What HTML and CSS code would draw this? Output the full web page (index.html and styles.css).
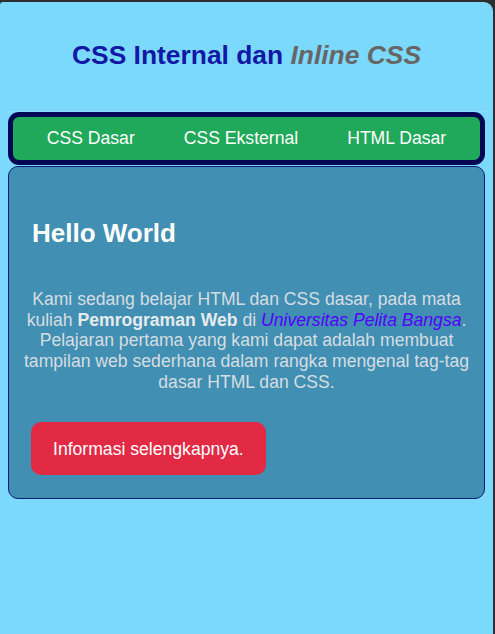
FILE: index.html
```html
<!DOCTYPE html>
<html lang="id">
<head>
<meta charset="utf-8">
<title>CSS Internal dan Inline CSS</title>
<link rel="stylesheet" href="styles.css">
</head>
<body>
<div class="window">
  <header class="header">
    <h1 class="title">CSS Internal dan <em class="title-em">Inline CSS</em></h1>
  </header>
  <nav class="nav">
    <a class="nav-link" href="#">CSS Dasar</a>
    <a class="nav-link" href="#">CSS Eksternal</a>
    <a class="nav-link" href="#">HTML Dasar</a>
  </nav>
  <section class="content">
    <h2 class="content-title">Hello World</h2>
    <p class="content-text">Kami sedang belajar HTML dan CSS dasar, pada mata kuliah <b class="strong">Pemrograman Web</b> di <i class="link-uni">Universitas Pelita Bangsa</i>. Pelajaran pertama yang kami dapat adalah membuat tampilan web sederhana dalam rangka mengenal tag-tag dasar HTML dan CSS.</p>
    <a class="btn" href="#">Informasi selengkapnya.</a>
  </section>
</div>
</body>
</html>
```

FILE: styles.css
```css
html, body {
  margin: 0;
  padding: 0;
  height: 100%;
}

body {
  background: #2e2e2e;
  font-family: "Liberation Sans", Arial, sans-serif;
  padding: 2px 2px 0 0;
  box-sizing: border-box;
}

.window {
  background: #7bd9fe;
  min-height: 632px;
  border-radius: 3px 9px 0 0;
  padding: 0 8px;
  box-sizing: border-box;
}

.header {
  height: 110px;
  border-bottom: 1px solid #8ddffd;
  display: flex;
  justify-content: center;
  padding-top: 38px;
  box-sizing: border-box;
}

.title {
  margin: 0;
  font-size: 26.4px;
  font-weight: bold;
  color: #1118a6;
  line-height: 30px;
}

.title-em {
  color: #666666;
  font-style: italic;
}

.nav {
  display: flex;
  justify-content: center;
  align-items: center;
  gap: 49px;
  height: 53px;
  box-sizing: border-box;
  background: #21a95b;
  border: 5px solid #000856;
  border-radius: 11px;
}

.nav-link {
  color: #ffffff;
  text-decoration: none;
  font-size: 17.6px;
  line-height: 21px;
}

.content {
  margin-top: 1px;
  background: #418fb2;
  border: 1px solid #0c1a78;
  border-radius: 10px;
  padding: 51px 8px 22px;
  height: 333px;
  box-sizing: border-box;
}

.content-title {
  margin: 0 0 41px 15px;
  font-size: 26px;
  font-weight: bold;
  color: #ffffff;
  line-height: 30px;
}

.content-text {
  margin: 0;
  text-align: center;
  font-size: 17.6px;
  line-height: 20.7px;
  color: #d6dde2;
}

.strong {
  font-weight: bold;
  color: #e6ebee;
}

.link-uni {
  color: #5300ff;
}

.btn {
  display: inline-block;
  margin: 29px 0 0 14px;
  padding: 17px 22px 16px;
  background: #e32a45;
  color: #ffffff;
  text-decoration: none;
  font-size: 17.6px;
  line-height: 20px;
  border-radius: 10px;
}
```
